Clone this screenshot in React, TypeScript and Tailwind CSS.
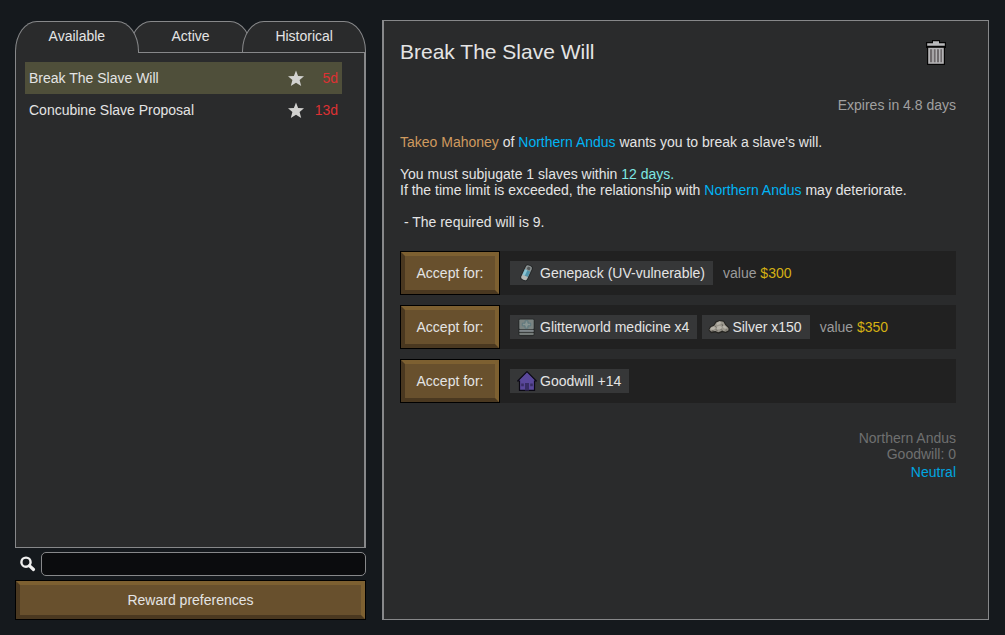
import { useState } from "react";
import type { ReactNode } from "react";

const TABS = ["Available", "Active", "Historical"] as const;

const QUESTS = [
  { name: "Break The Slave Will", expires: "5d" },
  { name: "Concubine Slave Proposal", expires: "13d" },
];

function Star() {
  return (
    <svg viewBox="0 0 16 16" className="h-4 w-4 shrink-0" aria-hidden="true">
      <path d="M8 .6 10.100 6 16 6.300 11.600 10 13.200 16 8 12.700 2.800 16 4.400 10 0 6.300 5.900 6Z" fill="#d2d2d0" />
    </svg>
  );
}

function SearchIcon() {
  return (
    <svg viewBox="0 0 16 16" className="h-4 w-4 shrink-0" aria-hidden="true">
      <circle cx="6" cy="6.2" r="4.6" fill="none" stroke="#efefef" strokeWidth="2.4" />
      <path d="m9.6 9.8 3.900 3.700" stroke="#efefef" strokeWidth="3.200" strokeLinecap="round" />
    </svg>
  );
}

function TrashIcon() {
  return (
    <svg viewBox="0 0 20 26" className="h-[26px] w-5" aria-hidden="true">
      <path d="M6 0h8v2h6v6h-1v17H1V8H0V2h6Z" fill="#050505" />
      <path d="M7 1.2h6v2h5.8v2.6H1.2V3.2H7Z" fill="#b9b9bb" />
      <path d="M2.2 7.8h15.6v16H2.2Z" fill="#b4b3b5" />
      <path d="M4 9.2h2.200v13H4ZM7.800 9.200h1.800v13H7.800ZM11 9.200h2v13h-2ZM14.400 9.200h1.600v13h-1.600Z" fill="#6e6a6c" />
    </svg>
  );
}

function GenepackIcon() {
  return (
    <svg viewBox="0 0 20 20" className="h-5 w-5" aria-hidden="true">
      <g transform="rotate(25 10 10)">
        <rect x="5.400" y="1.600" width="8.200" height="16.800" rx="2.800" fill="#242627" />
        <rect x="6.300" y="2.400" width="6.400" height="15.200" rx="2.200" fill="#8b9293" />
        <rect x="6.600" y="7.400" width="5.800" height="6" fill="#4f93aa" />
        <rect x="6.600" y="7.400" width="2.600" height="6" fill="#8ac3d2" />
        <rect x="8" y="3.600" width="3.200" height="3" rx="1" fill="#515657" />
        <path d="M6.600 13.400h5.800v2.400q0 1.600-2.900 1.600t-2.900-1.600Z" fill="#b5b8b5" />
      </g>
    </svg>
  );
}

function MedicineIcon() {
  return (
    <svg viewBox="0 0 20 20" className="h-5 w-5" aria-hidden="true">
      <rect x="1.200" y="1.600" width="16.600" height="17.600" rx="2.400" fill="#292b2b" />
      <rect x="2.300" y="2.400" width="14.400" height="9.800" rx="1" fill="#7b8482" />
      <rect x="2.300" y="12.900" width="14.400" height="2" fill="#80878a" />
      <rect x="2.300" y="15.700" width="14.400" height="2.400" rx=".8" fill="#757b79" />
      <path d="M8.100 3.800h2.800v2.400h2.800v2.600h-2.800v2.400H8.100V8.800H5.300V6.200H8.100Z" fill="#899593" stroke="#56747b" strokeWidth=".8" />
    </svg>
  );
}

function SilverIcon() {
  return (
    <svg viewBox="0 0 22 20" className="h-5 w-[22px]" aria-hidden="true">
      <path d="M.4 13 2 9.500 5.500 8 7.500 4.500 11.500 3l4.500.8 2 3.400 3.400 3.300.2 3.500-3.600 2-3.500-.8-4 1.600-3-1.200-4.500.6Z" fill="#252421" />
      <path d="M1.400 12.800 3 10l3.200-1.200L8.300 5.400l3.400-1.400 3.700.8 1.800 3.200 3.200 3 .1 2.300-2.900 1.400-3.500-.9-3.800 1.500-2.900-1.200-4.200.5Z" fill="#99958b" />
      <path d="m8.800 5.700 2.800-1.100 1.600 1.200-1.600 1.800-3 .4ZM2.600 11l3-1.600 2 1.500-1.800 1.800-3.200-.2ZM8.600 9.700l3.200-1 2.200 1.600-1.800 2-3 .2ZM15 8.900l1.800-.3 2.400 2.400-2.200.8-1.800-1.100Z" fill="#b7b3a9" />
      <path d="m7.200 9.200 1.400 1.200M8 12.400l1.600 1.800M12.600 12.600l2.400 1M14 7l.6 2M3.600 14l2-.6M17.400 13.200l1.800-.4" stroke="#67635b" strokeWidth=".9" />
    </svg>
  );
}

function FactionIcon() {
  return (
    <svg viewBox="0 0 20 20" className="h-5 w-5" aria-hidden="true">
      <path d="M10 .6 19.400 10H17.500v9.400h-15V10H.6Z" fill="#5a489b" stroke="#0b0914" strokeWidth="1.200" />
      <path d="M8 12h4v7.400H8ZM4.200 12.400h2.600v2.800H4.200ZM13.200 12.400h2.600v2.800h-2.600Z" fill="#382d64" />
    </svg>
  );
}

function BevelButton({ children, className }: { children: ReactNode; className: string }) {
  return (
    <button type="button" className={`flex cursor-pointer border border-black ${className}`}>
      <span className="flex flex-1 items-center justify-center self-stretch border-4 border-t-[#7d6031] border-r-[#7d6031] border-b-[#4a3820] border-l-[#4a3820] bg-[#68502d] hover:bg-[#745a34]">
        {children}
      </span>
    </button>
  );
}

type Reward = { icon: ReactNode; label: string };

const OFFERS: { rewards: Reward[]; value?: string }[] = [
  { rewards: [{ icon: <GenepackIcon />, label: "Genepack (UV-vulnerable)" }], value: "$300" },
  {
    rewards: [
      { icon: <MedicineIcon />, label: "Glitterworld medicine x4" },
      { icon: <SilverIcon />, label: "Silver x150" },
    ],
    value: "$350",
  },
  { rewards: [{ icon: <FactionIcon />, label: "Goodwill +14" }] },
];

function Offer({ rewards, value }: { rewards: Reward[]; value?: string }) {
  return (
    <li className="flex items-center gap-2.5 bg-[#212121]">
      <BevelButton className="h-11 w-[100px] shrink-0">Accept for:</BevelButton>
      <ul className="flex gap-[5px]">
        {rewards.map((r) => (
          <li key={r.label} className="flex h-6 items-center bg-[#363738] pr-2">
            <span className="flex w-[30px] justify-center pl-1">{r.icon}</span>
            {r.label}
          </li>
        ))}
      </ul>
      {value && (
        <p className="text-[#9b9b9b]">
          value <span className="text-[#d4b013]">{value}</span>
        </p>
      )}
    </li>
  );
}

export default function App() {
  const [tab, setTab] = useState<string>("Available");
  const [selected, setSelected] = useState(0);

  return (
    <div className="grid min-h-screen grid-cols-[351fr_607fr] gap-4 bg-[#15191d] px-4 pt-5 pb-[15px] pl-[15px] font-['Liberation_Sans',Arial,sans-serif] text-[14px] leading-4 text-[#e4e4e4]">
      <section className="flex min-w-0 flex-col pt-px" aria-label="Quests">
        <div role="tablist" className="flex">
          {TABS.map((name, i) => (
            <button
              key={name}
              type="button"
              role="tab"
              aria-selected={tab === name}
              onClick={() => setTab(name)}
              className={`relative h-8 flex-1 cursor-pointer border-x border-t border-[#87888a] bg-[#2a2b2c] [border-radius:22px_22px_0_0/30px_30px_0_0] ${
                i > 0 ? "-ml-2.5" : ""
              } ${tab === name ? "z-20 pb-[3px]" : "border-b pb-0.5"}`}
            >
              {name}
            </button>
          ))}
        </div>
        <ul className="-mt-px flex-1 border border-r-2 border-[#87888a] bg-[#2a2b2c] pt-[9px] pr-[22px] pl-[9px]">
          {QUESTS.map((q, i) => (
            <li key={q.name}>
              <button
                type="button"
                onClick={() => setSelected(i)}
                className={`flex h-8 w-full cursor-pointer items-center px-1 text-left ${
                  selected === i ? "bg-[#4f4f3a]" : ""
                }`}
              >
                <span className="flex-1">{q.name}</span>
                <Star />
                <span className="w-[34px] text-right text-[#dd3133]">{q.expires}</span>
              </button>
            </li>
          ))}
        </ul>
        <label className="mt-1 flex items-center gap-[5px] pl-[5px]">
          <SearchIcon />
          <input
            type="text"
            aria-label="Search quests"
            className="h-6 min-w-0 flex-1 rounded-[5px] border border-[#87888a] bg-[#0b0c0e] px-2 outline-none"
          />
        </label>
        <BevelButton className="mt-1 h-10 w-full">Reward preferences</BevelButton>
      </section>

      <main className="min-w-0 border border-l-2 border-[#87888a] bg-[#2a2b2c] pt-[19px] pr-8 pl-4">
        <header className="flex items-start justify-between">
          <h1 className="text-[21px] leading-6">Break The Slave Will</h1>
          <button type="button" aria-label="Dismiss quest" className="mr-2.5 cursor-pointer">
            <TrashIcon />
          </button>
        </header>
        <p className="mt-[31px] text-right text-[#a0a0a0]">Expires in 4.8 days</p>
        <div className="mt-[21px] whitespace-pre-wrap">
          <p>
            <span className="text-[#cf9a5f]">Takeo Mahoney</span> of{" "}
            <a href="#andus" className="text-[#00b4f5]">Northern Andus</a> wants you to break a slave's will.
          </p>
          <p className="mt-4">
            You must subjugate 1 slaves within <span className="text-[#7ee6e2]">12 days.</span>
          </p>
          <p>
            If the time limit is exceeded, the relationship with{" "}
            <a href="#andus" className="text-[#00b4f5]">Northern Andus</a> may deteriorate.
          </p>
          <p className="mt-4">{" - The required will is 9."}</p>
        </div>
        <ul className="mt-[21px] flex flex-col gap-2.5">
          {OFFERS.map((o, i) => (
            <Offer key={i} {...o} />
          ))}
        </ul>
        <div className="mt-[27px] text-right text-[#6f7070]">
          <p>Northern Andus</p>
          <p>Goodwill: 0</p>
          <p className="mt-0.5 text-[#00a5e0]">Neutral</p>
        </div>
      </main>
    </div>
  );
}
